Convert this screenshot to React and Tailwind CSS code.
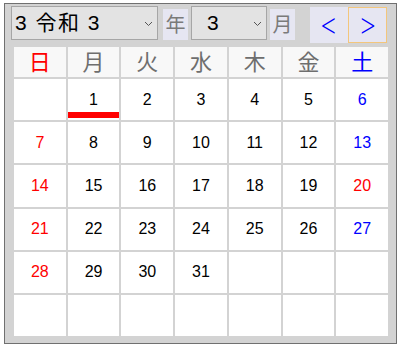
import { useState } from 'react';

const WEEK = ['日', '月', '火', '水', '木', '金', '土'];
const HOLIDAYS = [20];

// 令和3年3月: the 1st is a Monday
function buildCells() {
  const cells = [null];
  for (let d = 1; d <= 31; d++) cells.push(d);
  while (cells.length < 42) cells.push(null);
  return cells;
}

function Chevron() {
  return (
    <svg width="9" height="6" viewBox="0 0 9 6" className="pointer-events-none absolute right-[5px] top-[15px]">
      <polyline points="1,1 4.5,4.5 8,1" fill="none" stroke="#555" strokeWidth="1" />
    </svg>
  );
}

function dayColor(day, col) {
  if (col === 0 || HOLIDAYS.includes(day)) return 'text-[#ff0000]';
  if (col === 6) return 'text-[#0000ff]';
  return 'text-black';
}

function headColor(col) {
  if (col === 0) return 'text-[#ff0000]';
  if (col === 6) return 'text-[#0000ff]';
  return 'text-[#6e6e6e]';
}

export default function App() {
  const [today] = useState(1);
  const cells = buildCells();
  const font = { fontFamily: '"Liberation Sans", "Noto Sans CJK JP", sans-serif' };

  return (
    <div style={font} className="ml-[4px] mt-[3px] w-[393px] h-[341px] border border-[#707070] bg-[#d3d3d3]">
      {/* toolbar */}
      <div className="flex items-start h-[43px] pl-[6px] pt-[2px]">
        <div className="relative w-[147px] h-[34px]">
          <select className="appearance-none w-full h-full border border-[#a6a6a6] bg-[#e3e3e3] pl-[3px] text-[21px] tracking-[1.5px] text-black outline-none">
            <option>3 令和 3</option>
          </select>
          <Chevron />
        </div>
        <div className="ml-[5px] mt-[3px] w-[25px] h-[31px] bg-[#e6e6f2] flex items-center justify-center text-[20px] text-[#7a7a7a]">年</div>
        <div className="relative ml-[3px] w-[76px] h-[34px]">
          <select className="appearance-none w-full h-full border border-[#a6a6a6] bg-[#e3e3e3] pl-[15px] text-[21px] text-black outline-none">
            <option>3</option>
          </select>
          <Chevron />
        </div>
        <div className="ml-[3px] mt-[3px] w-[25px] h-[31px] bg-[#e6e6f2] flex items-center justify-center text-[20px] text-[#7a7a7a]">月</div>
        <div className="ml-[15px] mt-[1px] flex">
          <button className="w-[38px] h-[36px] bg-[#e6e6f2] text-[#0000ff] text-[30px] font-extralight leading-none flex items-center justify-center pb-[3px]" style={{ fontFamily: 'Inter, sans-serif' }}>&lt;</button>
          <button className="w-[39px] h-[36px] bg-[#e6e6f2] border border-[#f3c67c] text-[#0000ff] text-[30px] font-extralight leading-none flex items-center justify-center pb-[3px]" style={{ fontFamily: 'Inter, sans-serif' }}>&gt;</button>
        </div>
      </div>

      {/* calendar */}
      <div className="ml-[9px] w-[374px] h-[289px] grid grid-cols-7 grid-rows-[30px_repeat(6,1fr)] gap-[2px]">
        {WEEK.map((w, i) => (
          <div key={w} className={`bg-[#f8f8f8] flex items-center justify-center text-[22px] ${headColor(i)}`}>{w}</div>
        ))}
        {cells.map((d, i) => (
          <div key={i} className={`relative bg-white flex items-center justify-center text-[16px] ${dayColor(d, i % 7)}`}>
            {d}
            {d === today && <span className="absolute left-0 right-0 bottom-[2px] h-[6px] bg-[#ff0000]" />}
          </div>
        ))}
      </div>
    </div>
  );
}
